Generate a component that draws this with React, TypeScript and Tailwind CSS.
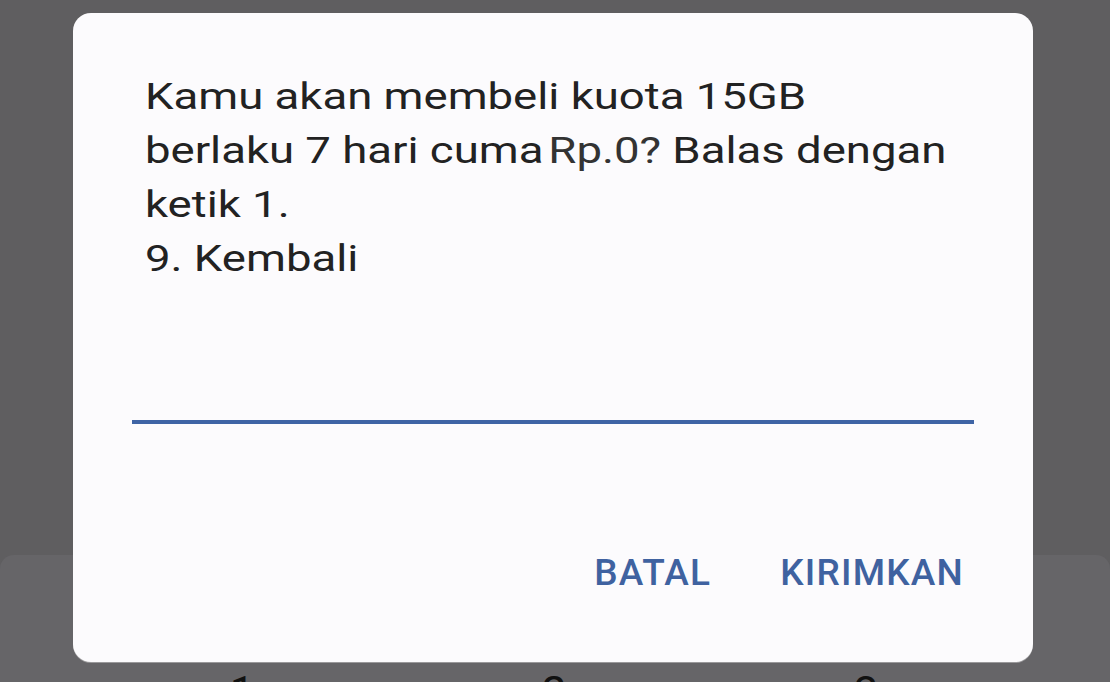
export default function App() {
  const font = { fontFamily: "Roboto, 'Noto Sans', sans-serif" };

  return (
    <div
      className="relative w-[1110px] h-[682px] overflow-hidden bg-[#5f5e60]"
      style={font}
    >
      {/* keyboard sitting behind the dialog */}
      <div className="mt-[555px] h-[127px] bg-[#666568] rounded-t-[14px] pt-[116px]">
        <div className="flex pl-[86px] text-[44px] leading-none text-[#111]">
          <div className="w-[312px] text-center">1</div>
          <div className="w-[312px] text-center">2</div>
          <div className="w-[312px] text-center">3</div>
        </div>
      </div>

      {/* USSD dialog */}
      <div className="absolute left-[73px] top-[13px] w-[960px] h-[649px] rounded-[18px] bg-[#fcfbfd] shadow-[0_1px_0_#9a999b]">
        <div className="pl-[72px] pt-[57px]">
          <div className="origin-top-left scale-x-[1.23] text-[37px] leading-[54px] text-[#222] whitespace-nowrap">
            <div>Kamu akan membeli kuota 15GB</div>
            <div>
              berlaku 7 hari cuma<span className="ml-[4px] text-[#333]">Rp.0?</span> Balas dengan
            </div>
            <div>ketik 1.</div>
            <div>9. Kembali</div>
          </div>
        </div>

        <div className="mx-[59px] mt-[134px] h-[4px] bg-[#3f64a5]" />

        <div className="mt-[122px] flex justify-end gap-[69px] pr-[69px] text-[37px] leading-[54px] font-medium tracking-[1.2px] text-[#3f62a0]">
          <span>BATAL</span>
          <span>KIRIMKAN</span>
        </div>
      </div>
    </div>
  );
}
